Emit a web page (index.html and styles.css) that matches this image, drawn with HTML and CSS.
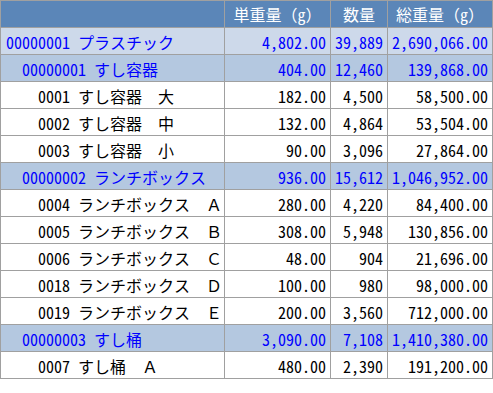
FILE: index.html
```html
<!DOCTYPE html>
<html lang="ja">
<head>
<meta charset="utf-8">
<link rel="stylesheet" href="styles.css">
</head>
<body>
<table class="grid">
  <colgroup>
    <col class="c-name">
    <col class="c-unit">
    <col class="c-qty">
    <col class="c-total">
  </colgroup>
  <thead>
    <tr class="head">
      <th></th>
      <th>単重量（g）</th>
      <th>数量</th>
      <th>総重量（g）</th>
    </tr>
  </thead>
  <tbody>
    <tr class="lv0"><td class="name">00000001 プラスチック</td><td class="num">4,802.00</td><td class="num">39,889</td><td class="num">2,690,066.00</td></tr>
    <tr class="lv1"><td class="name">00000001 すし容器</td><td class="num">404.00</td><td class="num">12,460</td><td class="num">139,868.00</td></tr>
    <tr class="lv2"><td class="name">0001 すし容器　大</td><td class="num">182.00</td><td class="num">4,500</td><td class="num">58,500.00</td></tr>
    <tr class="lv2"><td class="name">0002 すし容器　中</td><td class="num">132.00</td><td class="num">4,864</td><td class="num">53,504.00</td></tr>
    <tr class="lv2"><td class="name">0003 すし容器　小</td><td class="num">90.00</td><td class="num">3,096</td><td class="num">27,864.00</td></tr>
    <tr class="lv1"><td class="name">00000002 ランチボックス</td><td class="num">936.00</td><td class="num">15,612</td><td class="num">1,046,952.00</td></tr>
    <tr class="lv2"><td class="name">0004 ランチボックス　Ａ</td><td class="num">280.00</td><td class="num">4,220</td><td class="num">84,400.00</td></tr>
    <tr class="lv2"><td class="name">0005 ランチボックス　Ｂ</td><td class="num">308.00</td><td class="num">5,948</td><td class="num">130,856.00</td></tr>
    <tr class="lv2"><td class="name">0006 ランチボックス　Ｃ</td><td class="num">48.00</td><td class="num">904</td><td class="num">21,696.00</td></tr>
    <tr class="lv2"><td class="name">0018 ランチボックス　Ｄ</td><td class="num">100.00</td><td class="num">980</td><td class="num">98,000.00</td></tr>
    <tr class="lv2"><td class="name">0019 ランチボックス　Ｅ</td><td class="num">200.00</td><td class="num">3,560</td><td class="num">712,000.00</td></tr>
    <tr class="lv1"><td class="name">00000003 すし桶</td><td class="num">3,090.00</td><td class="num">7,108</td><td class="num">1,410,380.00</td></tr>
    <tr class="lv2"><td class="name">0007 すし桶　Ａ</td><td class="num">480.00</td><td class="num">2,390</td><td class="num">191,200.00</td></tr>
  </tbody>
</table>
</body>
</html>
```

FILE: styles.css
```css
html, body {
  margin: 0;
  padding: 0;
  background: #ffffff;
}

.grid {
  border-collapse: collapse;
  table-layout: fixed;
  width: 492px;
  font-family: "Noto Sans Mono CJK JP", "Noto Sans CJK JP", monospace;
  font-size: 16px;
  line-height: 20px;
}

.c-name { width: 224px; }
.c-unit { width: 106px; }
.c-qty { width: 57px; }
.c-total { width: 105px; }

.grid th,
.grid td {
  border: 1px solid #a0a0a0;
  height: 27px;
  padding: 1px 4px 0;
  box-sizing: border-box;
  white-space: nowrap;
  overflow: hidden;
  vertical-align: middle;
  font-weight: normal;
}

.head th {
  background: #5b86b8;
  color: #ffffff;
  text-align: center;
  padding: 0;
}

.num {
  text-align: right;
}

.lv0 td {
  background: #cdd9ea;
  color: #0000ff;
}

.lv1 td {
  background: #b4c8e0;
  color: #0000ff;
}

.lv2 td {
  background: #ffffff;
  color: #000000;
}

.lv0 .name { padding-left: 5px; }
.lv1 .name { padding-left: 21px; }
.lv2 .name { padding-left: 37px; }
```
